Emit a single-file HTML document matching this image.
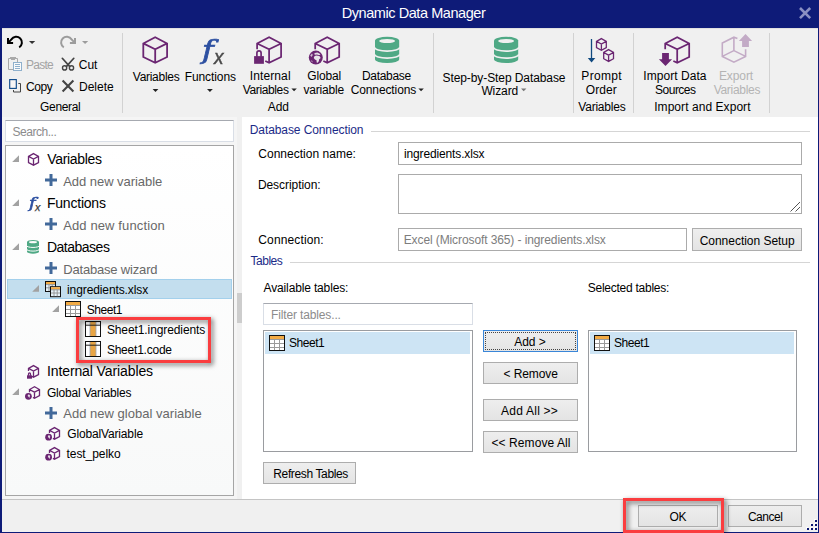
<!DOCTYPE html><html><head><meta charset="utf-8"><title>Dynamic Data Manager</title><style>

html,body{margin:0;padding:0}
body{width:819px;height:533px;overflow:hidden;position:relative;background:#f0f0f0;font-family:"Liberation Sans",sans-serif;font-size:12px;color:#1a1a1a}
.a{position:absolute}
.t{position:absolute;white-space:pre;line-height:16px;transform-origin:0 0;letter-spacing:0}
.btn{position:absolute;box-sizing:border-box;border:1px solid #adadad;background:linear-gradient(#eeeeee,#e4e4e4)}
.inp{position:absolute;box-sizing:border-box;border:1px solid #ababab;background:#fff}
.inp2{position:absolute;box-sizing:border-box;border:1px solid #d9dee6;border-top-color:#a6a9b0;background:#fff}
.sep{position:absolute;width:1px;background:#d2d2d2;top:33px;height:80px}
.red{position:absolute;box-sizing:border-box;border:3px solid #fa3d3f;filter:drop-shadow(2px 2px 2.5px rgba(0,0,0,.6))}
svg{position:absolute;overflow:visible}

</style></head><body>
<div class="a" style="left:0px;top:0px;width:819px;height:533px;background:#0e1b78;"></div>
<div class="a" style="left:2px;top:28px;width:816px;height:504px;background:#f0f0f0;"></div>
<div class="a" style="left:2px;top:28px;width:816px;height:1px;background:#e0e0e0;"></div>
<div class="a" style="left:242px;top:117px;width:576px;height:382px;background:#ffffff;"></div>
<div class="a" style="left:2px;top:117px;width:235px;height:382px;background:#f5f5f5;"></div>
<div class="a" style="left:237px;top:293px;width:5px;height:30px;background:#cdcdcd;"></div>
<div class="a" style="left:2px;top:499px;width:816px;height:1px;background:#c4c4c4;"></div>
<div class="sep" style="left:122px"></div>
<div class="sep" style="left:433px"></div>
<div class="sep" style="left:573px"></div>
<div class="sep" style="left:633px"></div>
<div class="sep" style="left:769px"></div>
<div class="inp2" style="left:5px;top:120px;width:229px;height:22px"></div>
<div class="a" style="left:5px;top:145px;width:229px;height:351px;box-sizing:border-box;border:1px solid #a5a5a5;background:linear-gradient(#fff,#f8f9f9)"></div>
<div class="a" style="left:7px;top:279px;width:225px;height:20px;box-sizing:border-box;border:1px solid #a3d0ec;background:#c3deee"></div>
<div class="a" style="left:371px;top:131px;width:439px;height:1px;background:#d5d5d5;"></div>
<div class="a" style="left:290px;top:262px;width:520px;height:1px;background:#d5d5d5;"></div>
<div class="inp" style="left:398px;top:142px;width:404px;height:23px"></div>
<div class="inp" style="left:398px;top:174px;width:404px;height:40px"></div>
<div class="inp" style="left:398px;top:228px;width:289px;height:23px"></div>
<div class="btn" style="left:692px;top:228px;width:110px;height:23px"></div>
<div class="inp2" style="left:263px;top:303px;width:210px;height:22px"></div>
<div class="a" style="left:263px;top:330px;width:210px;height:122px;box-sizing:border-box;border:1px solid #9a9ca0;background:#fff"></div>
<div class="a" style="left:265px;top:332px;width:205px;height:22px;background:#cde4f4;"></div>
<div class="a" style="left:588px;top:330px;width:209px;height:122px;box-sizing:border-box;border:1px solid #9a9ca0;background:#fff"></div>
<div class="a" style="left:590px;top:332px;width:204px;height:22px;background:#cde4f4;"></div>
<div class="btn" style="left:483px;top:330px;width:95px;height:22px;border-color:#3a86d8"><div class="a" style="left:1px;top:1px;right:1px;bottom:1px;border:1px dotted #444"></div></div>
<div class="btn" style="left:483px;top:362px;width:95px;height:22px"></div>
<div class="btn" style="left:483px;top:399px;width:95px;height:22px"></div>
<div class="btn" style="left:483px;top:431px;width:95px;height:22px"></div>
<div class="btn" style="left:263px;top:462px;width:93px;height:22px"></div>
<div class="btn" style="left:638px;top:505px;width:80px;height:22px"></div>
<div class="btn" style="left:728px;top:505px;width:74px;height:22px"></div>
<div class="a" style="left:814px;top:519px;width:2px;height:2px;background:#ffffff;"></div>
<div class="a" style="left:815px;top:520px;width:2px;height:2px;background:#0a1670;"></div>
<div class="a" style="left:810px;top:523px;width:2px;height:2px;background:#ffffff;"></div>
<div class="a" style="left:811px;top:524px;width:2px;height:2px;background:#0a1670;"></div>
<div class="a" style="left:814px;top:523px;width:2px;height:2px;background:#ffffff;"></div>
<div class="a" style="left:815px;top:524px;width:2px;height:2px;background:#0a1670;"></div>
<div class="a" style="left:806px;top:527px;width:2px;height:2px;background:#ffffff;"></div>
<div class="a" style="left:807px;top:528px;width:2px;height:2px;background:#0a1670;"></div>
<div class="a" style="left:810px;top:527px;width:2px;height:2px;background:#ffffff;"></div>
<div class="a" style="left:811px;top:528px;width:2px;height:2px;background:#0a1670;"></div>
<div class="a" style="left:814px;top:527px;width:2px;height:2px;background:#ffffff;"></div>
<div class="a" style="left:815px;top:528px;width:2px;height:2px;background:#0a1670;"></div>
<svg class="a" style="left:0;top:0" width="819" height="533" viewBox="0 0 819 533" ><path d="M800 8L810.2 18.2M810.2 8L800 18.2" stroke="#8b90c2" stroke-width="2.6" fill="none"/><path d="M8.6 42.4L11.4 39.4A5.7 5.7 0 1 1 19.2 47.3" fill="none" stroke="#000" stroke-width="2"/><path d="M8 38V43H13.1" fill="none" stroke="#000" stroke-width="2"/><path d="M29 41H35.2L32.1 44.1Z" fill="#333"/><path d="M74.4 42.4L71.6 39.4A5.7 5.7 0 1 0 63.8 47.3" fill="none" stroke="#9c9c9c" stroke-width="2"/><path d="M75 38V43H69.9" fill="none" stroke="#9c9c9c" stroke-width="2"/><path d="M82 41H88.2L85.1 44.1Z" fill="#9c9c9c"/><path d="M13 69.5H8.5V58.5H17.5V62" fill="none" stroke="#a9a9a9" stroke-width="1"/><path d="M10 57.5H16M11 59.5H15" stroke="#a9a9a9" stroke-width="1"/><rect x="13.5" y="62.5" width="8" height="8" fill="#fafafa" stroke="#8fb0cc" stroke-width="1"/><path d="M15 64.5H20M15 66.5H20M15 68.5H20" stroke="#8fb0cc" stroke-width="1"/><path d="M62.3 58.3L69.6 66.4M73.8 58.3L66.5 66.4" stroke="#444" stroke-width="1.7" fill="none" stroke-linecap="round"/><circle cx="64.6" cy="67.9" r="2.1" fill="none" stroke="#444" stroke-width="1.4"/><circle cx="71.5" cy="67.9" r="2.1" fill="none" stroke="#444" stroke-width="1.4"/><path d="M13.5 90V92H20.5V83.5H18.3" fill="none" stroke="#444" stroke-width="1"/><rect x="9.7" y="79.6" width="6.6" height="8.8" fill="#f8f6f6" stroke="#0f4a8a" stroke-width="1.15"/><path d="M62.6 80.6L73.4 91.4M73.4 80.6L62.6 91.4" stroke="#444" stroke-width="2.1" fill="none"/><path d="M155.2 37.2L167.1 43.4208L167.1 56.988800000000005L155.2 62.800000000000004L143.29999999999998 56.988800000000005L143.29999999999998 43.4208Z M143.29999999999998 43.4208L155.2 49.232L167.1 43.4208 M155.2 49.232L155.2 62.800000000000004" fill="none" stroke="#6b2672" stroke-width="1.8" stroke-linejoin="miter"/><path d="M152.6 89H158.4L155.5 92Z" fill="#222"/><path d="M207 89H212.8L209.9 92Z" fill="#222"/><path d="M257.1 49.232L257.1 43.4208L269.1 37.2L281.1 43.4208L281.1 56.988800000000005L269.1 62.800000000000004L265.26000000000005 60.940416000000006 M257.1 43.4208L269.1 49.232L281.1 43.4208 M269.1 49.232L269.1 62.800000000000004" fill="none" stroke="#6b2672" stroke-width="1.75" stroke-linejoin="miter"/><rect x="254.1" y="56.128" width="9.8" height="7.671999999999997" fill="#6b2672"/><path d="M256.893 56.628V53.04A2.107 2.107 0 0 1 261.107 53.04V56.628" fill="none" stroke="#6b2672" stroke-width="1.6660000000000001"/><path d="M291.4 88.6H296.8L294.1 91.3Z" fill="#222"/><path d="M315.2 49.232L315.2 43.4208L327.2 37.2L339.2 43.4208L339.2 56.988800000000005L327.2 62.800000000000004L323.36 60.940416000000006 M315.2 43.4208L327.2 49.232L339.2 43.4208 M327.2 49.232L327.2 62.800000000000004" fill="none" stroke="#6b2672" stroke-width="1.75" stroke-linejoin="miter"/><circle cx="315.8" cy="57.6" r="7" fill="#6b2672"/><polygon points="314.20,56.60 316.00,55.60 319.40,56.00 320.70,58.00 319.20,59.20 318.80,61.20 317.70,62.80 316.70,62.40 316.50,60.20 314.90,59.40 313.80,58.00" fill="#f0f0f0" opacity="0.95"/><polygon points="315.00,53.00 317.40,52.60 319.80,53.80 320.40,55.00 318.40,55.00 317.00,54.40 315.20,54.80 314.00,54.00" fill="#f0f0f0" opacity="0.9"/><polygon points="310.20,55.40 312.00,53.40 312.80,55.00 311.40,57.00" fill="#f0f0f0" opacity="0.75"/><polygon points="310.80,60.20 312.60,61.00 312.20,62.60" fill="#f0f0f0" opacity="0.65"/><path d="M375 40.613499999999995A12.1 3.8135 0 0 1 399.2 40.613499999999995V59.2865A12.1 3.8135 0 0 1 375 59.2865Z" fill="#4fa985"/><path d="M374.5 47.32A12.6 3.8135 0 0 0 399.7 47.32" fill="none" stroke="#f0f0f0" stroke-width="1.6306"/><path d="M374.5 54.289500000000004A12.6 3.8135 0 0 0 399.7 54.289500000000004" fill="none" stroke="#f0f0f0" stroke-width="1.6306"/><ellipse cx="387.1" cy="41.007999999999996" rx="7.986" ry="2.0974250000000003" fill="#f0f0f0"/><path d="M418.4 88.6H423.8L421.1 91.3Z" fill="#222"/><path d="M494 40.613499999999995A12.1 3.8135 0 0 1 518.2 40.613499999999995V59.2865A12.1 3.8135 0 0 1 494 59.2865Z" fill="#4fa985"/><path d="M493.5 47.32A12.6 3.8135 0 0 0 518.7 47.32" fill="none" stroke="#f0f0f0" stroke-width="1.6306"/><path d="M493.5 54.289500000000004A12.6 3.8135 0 0 0 518.7 54.289500000000004" fill="none" stroke="#f0f0f0" stroke-width="1.6306"/><ellipse cx="506.1" cy="41.007999999999996" rx="7.986" ry="2.0974250000000003" fill="#f0f0f0"/><path d="M521 88.6H526.4L523.7 91.3Z" fill="#777"/><path d="M591.5 39V59" stroke="#10497f" stroke-width="1.3" fill="none"/><path d="M587.8 58H595.3L591.55 62.4Z" fill="#10497f"/><path d="M601.4 38.6L606.3 41.418800000000005L606.3 47.5668L601.4 50.2L596.5 47.5668L596.5 41.418800000000005Z M596.5 41.418800000000005L601.4 44.052L606.3 41.418800000000005 M601.4 44.052L601.4 50.2" fill="none" stroke="#6b2672" stroke-width="1.3" stroke-linejoin="miter"/><path d="M608.6 49.6L613.5 52.4674L613.5 58.7214L608.6 61.400000000000006L603.7 58.7214L603.7 52.4674Z M603.7 52.4674L608.6 55.146L613.5 52.4674 M608.6 55.146L608.6 61.400000000000006" fill="none" stroke="#6b2672" stroke-width="1.3" stroke-linejoin="miter"/><path d="M665.2 49.232L665.2 43.4208L677.2 37.2L689.2 43.4208L689.2 56.988800000000005L677.2 62.800000000000004L673.36 60.940416000000006 M665.2 43.4208L677.2 49.232L689.2 43.4208 M677.2 49.232L677.2 62.800000000000004" fill="none" stroke="#6b2672" stroke-width="1.75" stroke-linejoin="miter"/><path d="M662.1 53.1H668.9V59.3H672.1L665.5 66L658.9 59.3H662.1Z" fill="#6b2672"/><path d="M737.4 38.6L733.9 37.2L722.3 43V56.4L733.9 62.2L745.6 56.4V49.2M733.9 37.2V50.6L722.3 56.4M733.9 50.6L745.6 56.4" fill="none" stroke="#c3abc6" stroke-width="1.6"/><path d="M745.5 33.9L752.1 40.9H748.9V46.9H742.1V40.9H738.9Z" fill="#c3abc6"/><path d="M790.5 211.5L800 202M795.5 211.5L800 207" stroke="#555" stroke-width="1" fill="none"/><path d="M12.2 162L19 155.3L19 162Z" fill="#a2a2a2"/><path d="M33.5 153.6L38.5 156.4188L38.5 162.5668L33.5 165.2L28.5 162.5668L28.5 156.4188Z M28.5 156.4188L33.5 159.052L38.5 156.4188 M33.5 159.052L33.5 165.2" fill="none" stroke="#6b2672" stroke-width="1.3" stroke-linejoin="miter"/><path d="M45 180H57M51 174V186" stroke="#42699a" stroke-width="3" fill="none"/><path d="M12.2 206L19 199.3L19 206Z" fill="#a2a2a2"/><path d="M45 224H57M51 218V230" stroke="#42699a" stroke-width="3" fill="none"/><path d="M12.2 250L19 243.3L19 250Z" fill="#a2a2a2"/><path d="M27 241.9865A6.0 1.9864999999999997 0 0 1 39 241.9865V251.71349999999998A6.0 1.9864999999999997 0 0 1 27 251.71349999999998Z" fill="#4fa985"/><path d="M26.5 245.48A6.5 1.9864999999999997 0 0 0 39.5 245.48" fill="none" stroke="#fbfbfb" stroke-width="1.0"/><path d="M26.5 249.1105A6.5 1.9864999999999997 0 0 0 39.5 249.1105" fill="none" stroke="#fbfbfb" stroke-width="1.0"/><ellipse cx="33.0" cy="242.192" rx="3.96" ry="1.0925749999999999" fill="#fbfbfb"/><path d="M45 268H57M51 262V274" stroke="#42699a" stroke-width="3" fill="none"/><path d="M32.2 291.8L39 285.1L39 291.8Z" fill="#a2a2a2"/><rect x="45.5" y="281.5" width="10" height="10" fill="#e6f2fa" stroke="#111" stroke-width="1"/><rect x="46" y="282" width="9" height="2.2" fill="#f2ab45"/><path d="M46 284.6H55M46 287.8H55M49 284.5V291M52.2 284.5V291" stroke="#8f8f8f" stroke-width="0.9" fill="none"/><rect x="50.5" y="286.7" width="10" height="10" fill="#e6f2fa" stroke="#111" stroke-width="1"/><rect x="51" y="287.2" width="9" height="2.2" fill="#f2ab45"/><path d="M51 289.8H60M51 293.0H60M54 289.7V296.2M57.2 289.7V296.2" stroke="#8f8f8f" stroke-width="0.9" fill="none"/><path d="M52.2 312L59 305.3L59 312Z" fill="#a2a2a2"/><rect x="65.5" y="301.5" width="15" height="15" fill="#ffffff" stroke="#111" stroke-width="1"/><rect x="66" y="302" width="14" height="3" fill="#f2ab45"/><path d="M66 305.5H80M66 309.5H80M66 313.5H80M70.5 305V316M75.5 305V316" stroke="#9a9a9a" stroke-width="1" fill="none"/><rect x="85.5" y="321.5" width="15" height="15" fill="#fff" stroke="#111" stroke-width="1"/><rect x="90" y="322" width="6" height="14" fill="#e8a545"/><path d="M90 322V336M96 322V336" stroke="#9aa3b5" stroke-width="0.8"/><path d="M86 325.2H100" stroke="#222" stroke-width="1"/><rect x="85.5" y="341.5" width="15" height="15" fill="#fff" stroke="#111" stroke-width="1"/><rect x="90" y="342" width="6" height="14" fill="#e8a545"/><path d="M90 342V356M96 342V356" stroke="#9aa3b5" stroke-width="0.8"/><path d="M86 345.2H100" stroke="#222" stroke-width="1"/><path d="M28.5 371.052L28.5 368.41880000000003L33.5 365.6L38.5 368.41880000000003L38.5 374.5668L33.5 377.20000000000005L31.9 376.35737600000004 M28.5 368.41880000000003L33.5 371.052L38.5 368.41880000000003 M33.5 371.052L33.5 377.20000000000005" fill="none" stroke="#6b2672" stroke-width="1.3" stroke-linejoin="miter"/><rect x="27" y="375.308" width="5" height="3.391999999999996" fill="#6b2672"/><path d="M28.5 375.808V373.95A1.0 1.0 0 0 1 30.5 373.95V375.808" fill="none" stroke="#6b2672" stroke-width="1.3"/><path d="M12.2 395L19 388.3L19 395Z" fill="#a2a2a2"/><path d="M29.5 392.152L29.5 389.5188L34.5 386.7L39.5 389.5188L39.5 395.66679999999997L34.5 398.3L32.9 397.457376 M29.5 389.5188L34.5 392.152L39.5 389.5188 M34.5 392.152L34.5 398.3" fill="none" stroke="#6b2672" stroke-width="1.3" stroke-linejoin="miter"/><circle cx="28.4" cy="396.3" r="3.4" fill="#6b2672"/><polygon points="28.16,394.45 29.66,394.65 30.05,395.81 29.27,398.05 28.59,396.79 27.62,396.01" fill="#fbfbfb" opacity="0.85"/><path d="M45 413H57M51 407V419" stroke="#42699a" stroke-width="3" fill="none"/><path d="M49.5 433.052L49.5 430.41880000000003L54.5 427.6L59.5 430.41880000000003L59.5 436.5668L54.5 439.20000000000005L52.9 438.35737600000004 M49.5 430.41880000000003L54.5 433.052L59.5 430.41880000000003 M54.5 433.052L54.5 439.20000000000005" fill="none" stroke="#6b2672" stroke-width="1.3" stroke-linejoin="miter"/><circle cx="48.6" cy="437.2" r="3.4" fill="#6b2672"/><polygon points="48.36,435.35 49.86,435.55 50.25,436.71 49.47,438.95 48.79,437.69 47.82,436.91" fill="#fbfbfb" opacity="0.85"/><path d="M49.5 453.052L49.5 450.41880000000003L54.5 447.6L59.5 450.41880000000003L59.5 456.5668L54.5 459.20000000000005L52.9 458.35737600000004 M49.5 450.41880000000003L54.5 453.052L59.5 450.41880000000003 M54.5 453.052L54.5 459.20000000000005" fill="none" stroke="#6b2672" stroke-width="1.3" stroke-linejoin="miter"/><circle cx="48.6" cy="457.2" r="3.4" fill="#6b2672"/><polygon points="48.36,455.35 49.86,455.55 50.25,456.71 49.47,458.95 48.79,457.69 47.82,456.91" fill="#fbfbfb" opacity="0.85"/><rect x="269.5" y="335.5" width="15" height="15" fill="#ffffff" stroke="#111" stroke-width="1"/><rect x="270" y="336" width="14" height="3" fill="#f2ab45"/><path d="M270 339.5H284M270 343.5H284M270 347.5H284M274.5 339V350M279.5 339V350" stroke="#9a9a9a" stroke-width="1" fill="none"/><rect x="594.5" y="335.5" width="15" height="15" fill="#ffffff" stroke="#111" stroke-width="1"/><rect x="595" y="336" width="14" height="3" fill="#f2ab45"/><path d="M595 339.5H609M595 343.5H609M595 347.5H609M599.5 339V350M604.5 339V350" stroke="#9a9a9a" stroke-width="1" fill="none"/></svg><span class="t" style="left:202.30px;top:31.86px;font-family:'DejaVu Serif',serif;font-style:italic;font-weight:normal;font-size:26.7px;line-height:35px;color:#2d50a1;-webkit-text-stroke:0.7px #2d50a1;transform:scaleX(1.2)">f</span><span class="t" style="left:213.60px;top:42.89px;font-family:'Liberation Sans',serif;font-style:italic;font-weight:normal;font-size:20.8px;line-height:27px;color:#4a4a4a;-webkit-text-stroke:0.45px #4a4a4a;transform:scaleX(0.92)">x</span><span class="t" style="left:28.60px;top:192.61px;font-family:'DejaVu Serif',serif;font-style:italic;font-weight:normal;font-size:15.3px;line-height:20px;color:#2d50a1;-webkit-text-stroke:0.6px #2d50a1;transform:scaleX(1.17)">f</span><span class="t" style="left:34.90px;top:200.06px;font-family:'Liberation Sans',serif;font-style:italic;font-weight:normal;font-size:10.8px;line-height:14px;color:#3a3a3a;-webkit-text-stroke:0.25px #3a3a3a;transform:scaleX(1.0)">x</span>
<span class="t" style="left:341.65px;top:5px;font-size:14.5px;color:#ffffff;letter-spacing:-0.429px">Dynamic Data Manager</span>
<span class="t" style="left:25.90px;top:57px;font-size:12px;color:#a3a3a3;letter-spacing:-0.713px">Paste</span>
<span class="t" style="left:78.80px;top:57px;font-size:12px;color:#000000;letter-spacing:-0.050px">Cut</span>
<span class="t" style="left:26.10px;top:79px;font-size:12px;color:#000000;letter-spacing:-0.433px">Copy</span>
<span class="t" style="left:79.00px;top:79px;font-size:12px;color:#000000;letter-spacing:0.010px">Delete</span>
<span class="t" style="left:40.10px;top:99px;font-size:12px;color:#000000;letter-spacing:-0.350px">General</span>
<span class="t" style="left:132.80px;top:69px;font-size:12px;color:#000000;letter-spacing:-0.281px">Variables</span>
<span class="t" style="left:184.70px;top:69px;font-size:12px;color:#000000;letter-spacing:-0.087px">Functions</span>
<span class="t" style="left:249.70px;top:68px;font-size:12px;color:#000000;letter-spacing:0.121px">Internal</span>
<span class="t" style="left:242.80px;top:82px;font-size:12px;color:#000000;letter-spacing:-0.381px">Variables</span>
<span class="t" style="left:267.80px;top:99px;font-size:12px;color:#000000;letter-spacing:-0.050px">Add</span>
<span class="t" style="left:307.20px;top:68px;font-size:12px;color:#000000;letter-spacing:-0.140px">Global</span>
<span class="t" style="left:303.40px;top:82px;font-size:12px;color:#000000;letter-spacing:-0.171px">variable</span>
<span class="t" style="left:362.00px;top:68px;font-size:12px;color:#000000;letter-spacing:-0.321px">Database</span>
<span class="t" style="left:350.70px;top:82px;font-size:12px;color:#000000;letter-spacing:-0.115px">Connections</span>
<span class="t" style="left:442.50px;top:70px;font-size:12px;color:#000000;letter-spacing:-0.087px">Step-by-Step Database</span>
<span class="t" style="left:481.40px;top:83px;font-size:12px;color:#000000;letter-spacing:-0.100px">Wizard</span>
<span class="t" style="left:581.30px;top:68px;font-size:12px;color:#000000;letter-spacing:0.330px">Prompt</span>
<span class="t" style="left:585.80px;top:82px;font-size:12px;color:#000000;letter-spacing:0.075px">Order</span>
<span class="t" style="left:578.30px;top:99px;font-size:12px;color:#000000;letter-spacing:-0.219px">Variables</span>
<span class="t" style="left:643.30px;top:68px;font-size:12px;color:#000000;letter-spacing:0.055px">Import Data</span>
<span class="t" style="left:655.10px;top:82px;font-size:12px;color:#000000;letter-spacing:-0.517px">Sources</span>
<span class="t" style="left:718.90px;top:68px;font-size:12px;color:#b4b4b4;letter-spacing:-0.090px">Export</span>
<span class="t" style="left:713.70px;top:82px;font-size:12px;color:#b4b4b4;letter-spacing:-0.306px">Variables</span>
<span class="t" style="left:654.20px;top:99px;font-size:12px;color:#000000;letter-spacing:0.059px">Import and Export</span>
<span class="t" style="left:12.50px;top:124px;font-size:12px;color:#8c8c8c;letter-spacing:-0.475px">Search...</span>
<span class="t" style="left:47.15px;top:151px;font-size:14px;color:#000000;letter-spacing:-0.300px">Variables</span>
<span class="t" style="left:63.20px;top:174px;font-size:13px;color:#686868;letter-spacing:-0.043px">Add new variable</span>
<span class="t" style="left:46.95px;top:195px;font-size:14px;color:#000000;letter-spacing:-0.213px">Functions</span>
<span class="t" style="left:63.20px;top:218px;font-size:13px;color:#686868;letter-spacing:0.120px">Add new function</span>
<span class="t" style="left:46.95px;top:239px;font-size:14px;color:#000000;letter-spacing:-0.494px">Databases</span>
<span class="t" style="left:63.20px;top:262px;font-size:13px;color:#686868;letter-spacing:-0.179px">Database wizard</span>
<span class="t" style="left:67.05px;top:282px;font-size:12px;color:#000000;letter-spacing:-0.103px">ingredients.xlsx</span>
<span class="t" style="left:86.70px;top:302px;font-size:12px;color:#000000;letter-spacing:-0.440px">Sheet1</span>
<span class="t" style="left:106.90px;top:322px;font-size:12px;color:#000000;letter-spacing:-0.097px">Sheet1.ingredients</span>
<span class="t" style="left:106.90px;top:342px;font-size:12px;color:#000000;letter-spacing:-0.225px">Sheet1.code</span>
<span class="t" style="left:46.95px;top:363px;font-size:14px;color:#000000;letter-spacing:-0.103px">Internal Variables</span>
<span class="t" style="left:46.90px;top:385px;font-size:12px;color:#000000;letter-spacing:-0.177px">Global Variables</span>
<span class="t" style="left:63.20px;top:406px;font-size:13px;color:#686868;letter-spacing:0.023px">Add new global variable</span>
<span class="t" style="left:67.30px;top:426px;font-size:12px;color:#000000;letter-spacing:-0.158px">GlobalVariable</span>
<span class="t" style="left:66.55px;top:446px;font-size:12px;color:#000000;letter-spacing:-0.067px">test_pelko</span>
<span class="t" style="left:249.80px;top:122px;font-size:12px;color:#1b2a87;letter-spacing:-0.097px">Database Connection</span>
<span class="t" style="left:258.30px;top:146px;font-size:12px;color:#000000;letter-spacing:0.017px">Connection name:</span>
<span class="t" style="left:403.95px;top:146px;font-size:12px;color:#000000;letter-spacing:-0.137px">ingredients.xlsx</span>
<span class="t" style="left:257.90px;top:177px;font-size:12px;color:#000000;letter-spacing:-0.059px">Description:</span>
<span class="t" style="left:258.30px;top:232px;font-size:12px;color:#000000;letter-spacing:0.130px">Connection:</span>
<span class="t" style="left:403.70px;top:232px;font-size:12px;color:#7d7d7d;letter-spacing:-0.101px">Excel (Microsoft 365) - ingredients.xlsx</span>
<span class="t" style="left:699.70px;top:233px;font-size:12px;color:#000000;letter-spacing:-0.027px">Connection Setup</span>
<span class="t" style="left:250.55px;top:253px;font-size:12px;color:#1b2a87;letter-spacing:-0.500px">Tables</span>
<span class="t" style="left:263.60px;top:280px;font-size:12px;color:#000000;letter-spacing:-0.150px">Available tables:</span>
<span class="t" style="left:587.80px;top:280px;font-size:12px;color:#000000;letter-spacing:-0.257px">Selected tables:</span>
<span class="t" style="left:271.00px;top:307px;font-size:12px;color:#8c8c8c;letter-spacing:-0.140px">Filter tables...</span>
<span class="t" style="left:289.10px;top:335px;font-size:12px;color:#000000;letter-spacing:-0.480px">Sheet1</span>
<span class="t" style="left:614.10px;top:335px;font-size:12px;color:#000000;letter-spacing:-0.480px">Sheet1</span>
<span class="t" style="left:514.30px;top:334px;font-size:12px;color:#000000;letter-spacing:-0.062px">Add &gt;</span>
<span class="t" style="left:503.50px;top:366px;font-size:12px;color:#000000;letter-spacing:-0.086px">&lt; Remove</span>
<span class="t" style="left:501.00px;top:403px;font-size:12px;color:#000000;letter-spacing:0.239px">Add All &gt;&gt;</span>
<span class="t" style="left:491.50px;top:435px;font-size:12px;color:#000000;letter-spacing:0.079px">&lt;&lt; Remove All</span>
<span class="t" style="left:273.30px;top:466px;font-size:12px;color:#000000;letter-spacing:-0.369px">Refresh Tables</span>
<span class="t" style="left:669.50px;top:509px;font-size:12px;color:#000000;letter-spacing:-0.300px">OK</span>
<span class="t" style="left:747.90px;top:509px;font-size:12px;color:#000000;letter-spacing:-0.460px">Cancel</span>
<div class="red" style="left:76px;top:317px;width:135px;height:46px"></div>
<div class="red" style="left:623px;top:498px;width:101px;height:35px"></div>
</body></html>
